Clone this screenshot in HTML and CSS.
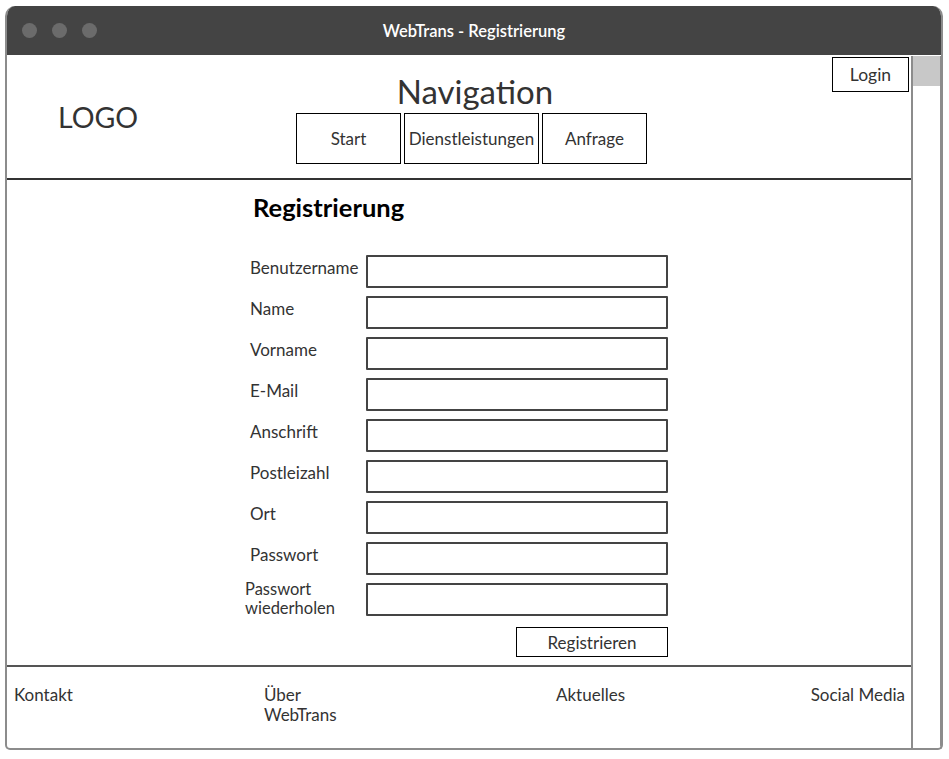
FILE: index.html
```html
<!DOCTYPE html>
<html lang="de">

<head>
  <meta charset="UTF-8">
  <title>WebTrans - Registrierung</title>
  <link rel="stylesheet" href="styles.css">
</head>

<body>
  <div class="window">
    <div class="titlebar">
      <div class="dots">
        <span></span>
        <span></span>
        <span></span>
      </div>
      <div class="title">WebTrans - Registrierung</div>
    </div>
    <div class="frame">
      <div class="page">
        <header>
          <div class="logo">LOGO</div>
          <nav>
            <h1>Navigation</h1>
            <div class="nav-items">
              <a class="nav-btn start">Start</a>
              <a class="nav-btn services">Dienstleistungen</a>
              <a class="nav-btn start">Anfrage</a>
            </div>
          </nav>
          <a class="login">Login</a>
        </header>
        <main>
          <h2>Registrierung</h2>
          <form class="form">
            <label>Benutzername</label><span class="field"></span>
            <label>Name</label><span class="field"></span>
            <label>Vorname</label><span class="field"></span>
            <label>E-Mail</label><span class="field"></span>
            <label>Anschrift</label><span class="field"></span>
            <label>Postleizahl</label><span class="field"></span>
            <label>Ort</label><span class="field"></span>
            <label>Passwort</label><span class="field"></span>
            <label class="two-lines">Passwort<br>wiederholen</label><span class="field"></span>
            <span></span><a class="submit">Registrieren</a>
          </form>
        </main>
        <footer>
          <span>Kontakt</span>
          <span>Über<br>WebTrans</span>
          <span>Aktuelles</span>
          <span class="social">Social Media</span>
        </footer>
      </div>
      <div class="scrollbar">
        <div class="thumb"></div>
      </div>
    </div>
  </div>
</body>

</html>
```

FILE: styles.css
```css
html,
body {
  margin: 0;
  padding: 0;
  background: #fff;
  font-family: "Lato", "Liberation Sans", sans-serif;
  color: #333;
}

.window {
  margin: 6px 0 0 5px;
  width: 938px;
  height: 744px;
  box-sizing: border-box;
  border: 2px solid #8c8c8c;
  border-top: none;
  border-radius: 10px 10px 5px 5px;
  overflow: hidden;
  display: flex;
  flex-direction: column;
}

.titlebar {
  flex-shrink: 0;
  height: 49px;
  background: #444;
  display: flex;
  align-items: center;
  position: relative;
}

.dots {
  display: flex;
  gap: 15px;
  padding-left: 15px;
}

.dots span {
  width: 15px;
  height: 15px;
  border-radius: 50%;
  background: #6b6b6b;
}

.title {
  position: absolute;
  left: 0;
  right: 0;
  text-align: center;
  color: #fff;
  font-size: 16.5px;
  font-weight: 600;
}

.frame {
  flex: 1;
  display: flex;
  min-height: 0;
}

.page {
  width: 904px;
  display: flex;
  flex-direction: column;
}

.scrollbar {
  width: 27px;
  border-left: 2px solid #8c8c8c;
  border-right: 1px solid #8c8c8c;
  margin-top: 1px;
}

.thumb {
  height: 30px;
  background: #c8c8c8;
}

/* Kopfbereich */
header {
  flex-shrink: 0;
  height: 123px;
  border-bottom: 2px solid #333;
  display: flex;
}

.logo {
  width: 238px;
  padding-left: 51px;
  padding-top: 45px;
  font-size: 28.5px;
}

nav {
  display: flex;
  flex-direction: column;
  align-items: center;
  padding-top: 16px;
}

h1 {
  margin: 0 0 2px 7px;
  font-size: 33px;
  font-weight: normal;
  line-height: 40px;
}

.nav-items {
  display: flex;
  gap: 3px;
}

.nav-btn {
  height: 51px;
  box-sizing: border-box;
  border: 1px solid #000;
  display: flex;
  align-items: center;
  justify-content: center;
  font-size: 17px;
}

.start {
  width: 105px;
}

.services {
  width: 135px;
}

.login {
  margin-left: auto;
  margin-top: 2px;
  margin-right: 2px;
  width: 77px;
  height: 35px;
  box-sizing: border-box;
  border: 1px solid #000;
  display: flex;
  align-items: center;
  justify-content: center;
  font-size: 17.5px;
}

/* Formular */
main {
  flex: 1;
  padding: 12px 0 0 238px;
}

h2 {
  margin: 0 0 33px 8px;
  font-size: 25.5px;
  line-height: 30px;
  color: #000;
}

.form {
  display: grid;
  grid-template-columns: 121px 302px;
  grid-auto-rows: 33px;
  row-gap: 8px;
}

.form label {
  font-size: 17px;
  line-height: 20px;
  padding: 3px 0 0 5px;
}

.form label.two-lines {
  padding: 0;
  margin-top: -3px;
  font-size: 16.5px;
  line-height: 19px;
}

.field {
  border: 2px solid #444;
  border-radius: 1px;
}

.submit {
  justify-self: end;
  width: 152px;
  height: 30px;
  margin-top: 3px;
  box-sizing: border-box;
  border: 1px solid #000;
  display: flex;
  align-items: center;
  justify-content: center;
  font-size: 17px;
}

/* Fußzeile */
footer {
  flex-shrink: 0;
  height: 83px;
  box-sizing: border-box;
  border-top: 2px solid #555;
  display: grid;
  grid-template-columns: 250px 292px 254px 1fr;
  padding: 18px 6px 0 7px;
  font-size: 17px;
  line-height: 20px;
}

footer .social {
  text-align: right;
}
```
